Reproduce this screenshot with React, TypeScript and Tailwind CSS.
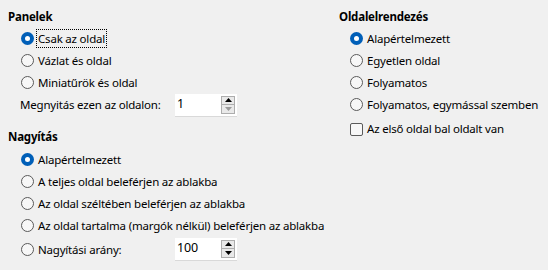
import React from "react";

const font = { fontFamily: '"Noto Sans", "Segoe UI", sans-serif' };

function Radio({ checked, label, focus }: { checked?: boolean; label: string; focus?: boolean }) {
  return (
    <div className="flex h-[22px] items-center whitespace-nowrap">
      {checked ? (
        <span className="flex h-[13px] w-[13px] shrink-0 items-center justify-center rounded-full bg-[#005fb8]">
          <span className="h-[5px] w-[5px] rounded-full bg-white" />
        </span>
      ) : (
        <span className="h-[13px] w-[13px] shrink-0 rounded-full border border-[#5a5a5a] bg-[#f7f7f7]" />
      )}
      <span
        className={
          "ml-[3px] px-[1px] leading-[17px] " +
          (focus ? "outline outline-1 outline-dotted outline-[#000]" : "")
        }
      >
        {label}
      </span>
    </div>
  );
}

function Spin({ value, downDisabled }: { value: string; downDisabled?: boolean }) {
  return (
    <div className="flex h-[23px] w-[62px] shrink-0 border-b border-[#d9d9d9] bg-white">
      <div className="flex flex-1 items-center pl-[2px] text-[12.5px]">{value}</div>
      <div className="my-[2px] mr-[2px] flex w-[14px] flex-col border border-[#adadad] bg-[#e9e9e9]">
        <div className="flex flex-1 items-center justify-center border-b border-[#adadad]">
          <svg width="7" height="4" viewBox="0 0 7 4">
            <path d="M0 4 L3.5 0 L7 4 Z" fill="#000" />
          </svg>
        </div>
        <div className="flex flex-1 items-center justify-center">
          <svg width="7" height="4" viewBox="0 0 7 4">
            <path d="M0 0 L3.5 4 L7 0 Z" fill={downDisabled ? "#9a9a9a" : "#000"} />
          </svg>
        </div>
      </div>
    </div>
  );
}

export default function App() {
  return (
    <div
      className="flex h-[270px] w-[548px] bg-[#f0f0f0] pl-[8px] pt-[6px] text-[11.5px] tracking-[-0.2px] text-black"
      style={font}
    >
      <div className="flex w-[331px] shrink-0 flex-col">
        <div className="flex h-[21px] items-center font-bold">Panelek</div>
        <div className="flex flex-col pl-[13px]">
          <Radio checked label="Csak az oldal" focus />
          <Radio label="Vázlat és oldal" />
          <Radio label="Miniatűrök és oldal" />
        </div>
        <div className="flex h-[24px] items-center whitespace-nowrap pl-[12px]">
          <span className="w-[155px] shrink-0">Megnyitás ezen az oldalon:</span>
          <Spin value="1" downDisabled />
        </div>
        <div className="mt-[9px] flex h-[22px] items-center font-bold">Nagyítás</div>
        <div className="flex flex-col pl-[13px]">
          <Radio checked label="Alapértelmezett" />
          <Radio label="A teljes oldal beleférjen az ablakba" />
          <Radio label="Az oldal széltében beleférjen az ablakba" />
          <Radio label="Az oldal tartalma (margók nélkül) beleférjen az ablakba" />
          <div className="mt-[1px] flex h-[24px] items-center">
            <div className="w-[154px] shrink-0">
              <Radio label="Nagyítási arány:" />
            </div>
            <Spin value="100" />
          </div>
        </div>
      </div>
      <div className="flex flex-col whitespace-nowrap">
        <div className="flex h-[21px] items-center font-bold">Oldalelrendezés</div>
        <div className="flex flex-col pl-[11px]">
          <Radio checked label="Alapértelmezett" />
          <Radio label="Egyetlen oldal" />
          <Radio label="Folyamatos" />
          <Radio label="Folyamatos, egymással szemben" />
          <div className="mt-[3px] flex h-[22px] items-center">
            <span className="h-[13px] w-[13px] shrink-0 rounded-[2px] border border-[#5a5a5a] bg-[#f7f7f7]" />
            <span className="ml-[4px]">Az első oldal bal oldalt van</span>
          </div>
        </div>
      </div>
    </div>
  );
}
